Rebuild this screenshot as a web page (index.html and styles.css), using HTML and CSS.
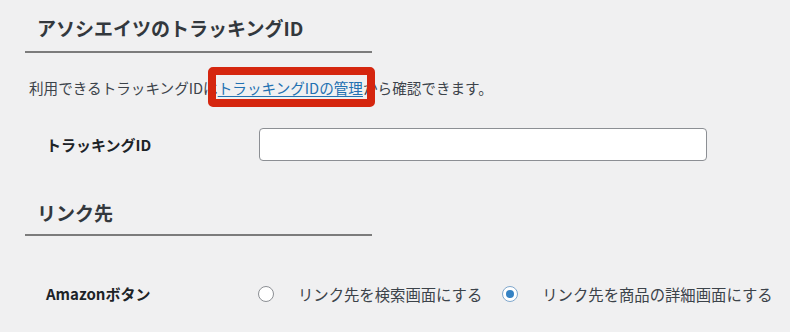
FILE: index.html
```html
<!DOCTYPE html>
<html lang="ja">
<head>
<meta charset="utf-8">
<link rel="stylesheet" href="styles.css">
</head>
<body>
<div class="page">
  <h2 class="head head-first">アソシエイツのトラッキングID</h2>
  <p class="note">利用できるトラッキングIDは<a class="mark" href="#">トラッキングIDの管理</a>から確認できます。</p>
  <div class="row row-id">
    <label class="label" for="tid">トラッキングID</label>
    <input class="text" id="tid" type="text">
  </div>
  <h2 class="head head-second">リンク先</h2>
  <div class="row row-radio">
    <span class="label">Amazonボタン</span>
    <label class="opt opt-first"><input type="radio" name="dest" class="radio"><span class="opt-text">リンク先を検索画面にする</span></label>
    <label class="opt"><input type="radio" name="dest" class="radio" checked><span class="opt-text">リンク先を商品の詳細画面にする</span></label>
  </div>
</div>
</body>
</html>
```

FILE: styles.css
```css
html, body {
  margin: 0;
  padding: 0;
  background: #f0f0f1;
}
body {
  font-family: "Noto Sans CJK JP", "Noto Sans", sans-serif;
  color: #2c3338;
}
.page {
  width: 790px;
  height: 332px;
  overflow: hidden;
}
.head {
  margin: 0 0 0 25px;
  width: 347px;
  box-sizing: border-box;
  padding: 15px 0 10px 12px;
  font-size: 19px;
  line-height: 26px;
  font-weight: 700;
  border-bottom: 2px solid #7c7c7c;
  color: #33383d;
}
.head-second {
  margin-top: 24px;
  padding-bottom: 8px;
}
.note {
  margin: 24px 0 0 29px;
  font-size: 14.6px;
  line-height: 22px;
  white-space: nowrap;
  color: #3c434a;
}
.mark {
  position: relative;
  color: #2271b1;
  text-decoration: underline;
  text-underline-offset: 2px;
}
.mark::before {
  content: "";
  position: absolute;
  left: -10px;
  right: -12px;
  top: -10px;
  bottom: -9px;
  border: 8px solid #d5260f;
  border-radius: 5px;
  pointer-events: none;
}
.row {
  display: flex;
  align-items: center;
  padding-left: 46px;
}
.row-id {
  margin-top: 29px;
  height: 33px;
}
.label {
  width: 213px;
  flex: none;
  font-size: 15px;
  font-weight: 700;
  line-height: 22px;
  color: #1d2327;
}
.text {
  width: 448px;
  height: 33px;
  box-sizing: border-box;
  border: 1px solid #8c8f94;
  border-radius: 4px;
  background: #fff;
  margin: 0;
  padding: 0 8px;
}
.row-radio {
  margin-top: 46px;
  height: 24px;
}
.opt {
  display: flex;
  align-items: center;
  font-size: 15.35px;
  line-height: 22px;
  color: #3c434a;
  white-space: nowrap;
}
.opt-first {
  margin-left: -1px;
  margin-right: 20px;
}
.radio {
  appearance: none;
  -webkit-appearance: none;
  width: 16px;
  height: 16px;
  margin: 0 24px 0 0;
  border: 1px solid #8c8f94;
  border-radius: 50%;
  background: #fff;
  display: grid;
  place-items: center;
  box-sizing: border-box;
}
.radio:checked {
  border-color: #7fa7cc;
}
.radio:checked::before {
  content: "";
  width: 8px;
  height: 8px;
  border-radius: 50%;
  background: #3582c4;
}
```
